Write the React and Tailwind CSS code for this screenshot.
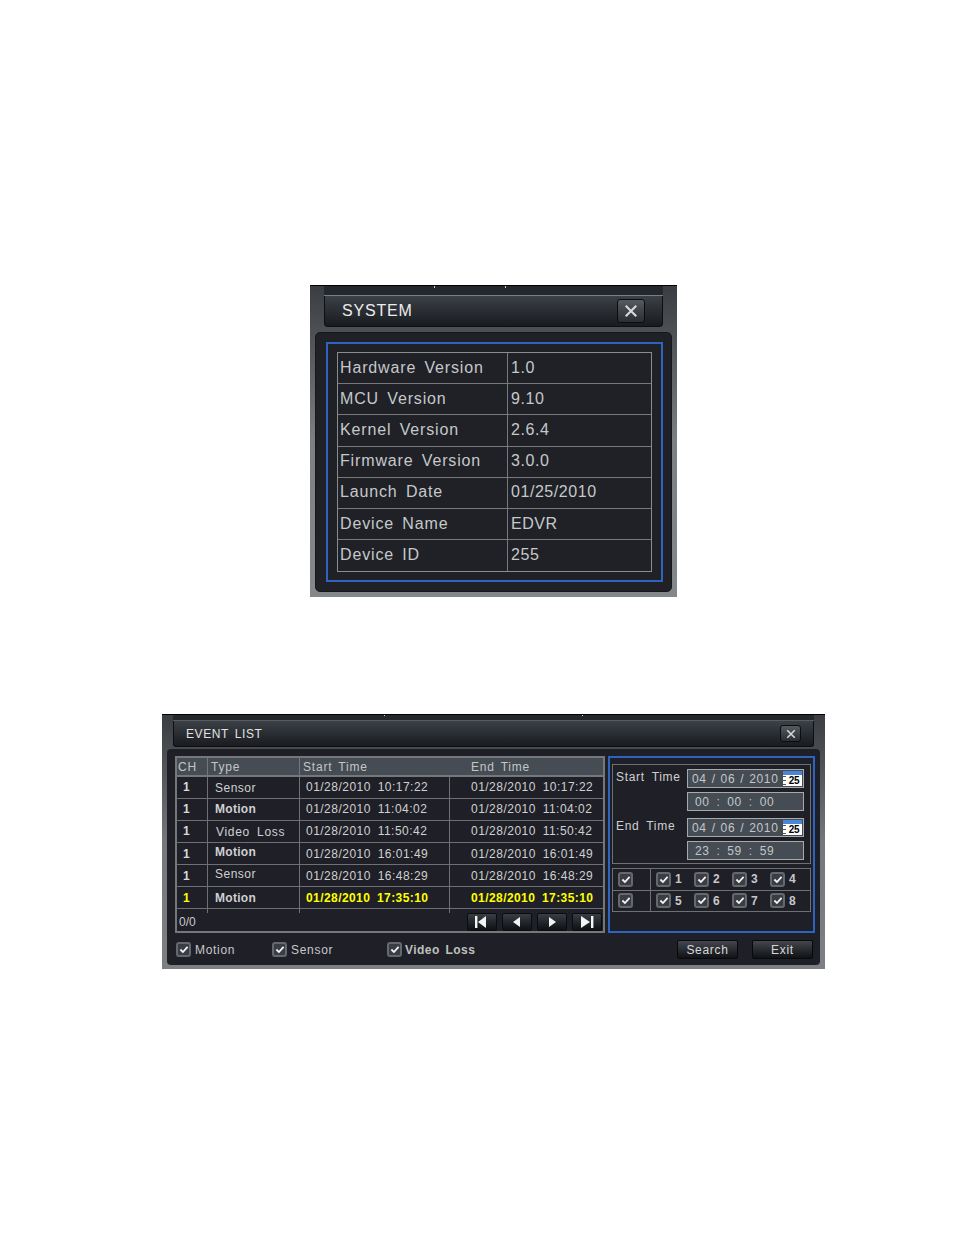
const rows = [
  { ty: "Sensor", tcls: "pl-[7px] font-normal", d: "01/28/2010 10:17:22", dc: "pb-[1px]", t: "text-[#d0d0d0]" },
  { ty: "Motion", tcls: "pl-[7px] pb-[2px] font-bold tracking-[0.3px]", d: "01/28/2010 11:04:02", dc: "pb-[1px]", t: "text-[#d0d0d0]" },
  { ty: "Video Loss", tcls: "pl-[8px] tracking-[0.7px]", d: "01/28/2010 11:50:42", dc: "pb-[1px]", t: "text-[#d0d0d0]" },
  { ty: "Motion", tcls: "pl-[7px] pb-[3px] font-bold tracking-[0.3px]", d: "01/28/2010 16:01:49", dc: "", t: "text-[#d0d0d0]" },
  { ty: "Sensor", tcls: "pl-[7px] pb-[4px]", d: "01/28/2010 16:48:29", dc: "", t: "text-[#d0d0d0]" },
  { ty: "Motion", tcls: "pl-[7px] font-bold tracking-[0.3px]", d: "01/28/2010 17:35:10", dc: "", t: "text-[#ffff00] font-bold tracking-[0.42px]" },
];

const sys = [
  ["Hardware Version", "1.0"],
  ["MCU Version", "9.10"],
  ["Kernel Version", "2.6.4"],
  ["Firmware Version", "3.0.0"],
  ["Launch Date", "01/25/2010"],
  ["Device Name", "EDVR"],
  ["Device ID", "255"],
];

function CloseBtn({ cls, size }) {
  return (
    <div className={"flex items-center justify-center rounded-[3px] border border-[#0c0d0f] bg-gradient-to-b from-[#565b60] to-[#2b2e33] " + cls}>
      <svg width={size} height={size} viewBox="0 0 12 12">
        <path d="M1.5 1.5 L10.5 10.5 M10.5 1.5 L1.5 10.5" stroke="#d8dadc" strokeWidth="1.8" />
      </svg>
    </div>
  );
}

function Check({ cls = "" }) {
  return (
    <div className={"w-[15px] h-[15px] shrink-0 rounded-[3px] border-2 border-[#66696c] bg-[#3a3e44] flex items-center justify-center " + cls}>
      <svg width="10" height="9" viewBox="0 0 11 10">
        <path d="M1.5 5 L4.3 7.8 L9.5 2" fill="none" stroke="#f4f4f4" strokeWidth="2" />
      </svg>
    </div>
  );
}

function Calendar() {
  return (
    <div className="w-[19px] h-[15px] flex flex-col bg-white shrink-0">
      <div className="h-[4px] bg-[#4a86d8]" />
      <div className="flex-1 flex">
        <div className="w-[3px] my-[1px] flex flex-col justify-between">
          <div className="h-px bg-[#555]" /><div className="h-px bg-[#555]" /><div className="h-px bg-[#555]" />
        </div>
        <div className="flex-1 text-[10px] leading-[11px] font-bold text-black text-center tracking-[-0.2px]">25</div>
      </div>
    </div>
  );
}

function Nav({ kind }) {
  const paths = {
    first: <><rect x="3" y="2" width="2.4" height="12" fill="#f4f4f4" /><path d="M14 2 V14 L6 8 Z" fill="#f4f4f4" /></>,
    prev: <path d="M13 3 V13 L6 8 Z" fill="#f4f4f4" />,
    next: <path d="M7 3 V13 L14 8 Z" fill="#f4f4f4" />,
    last: <><path d="M4 2 V14 L13 8 Z" fill="#f4f4f4" /><rect x="14" y="2" width="2.4" height="12" fill="#f4f4f4" /></>,
  };
  return (
    <div className="w-[30px] h-[18px] rounded-[2px] border border-[#0b0c0e] bg-gradient-to-b from-[#3a3e44] to-[#0f1114] flex items-center justify-center">
      <svg width="20" height="16" viewBox="0 0 20 16">{paths[kind]}</svg>
    </div>
  );
}

function Btn({ label }) {
  return (
    <div className="w-[61px] h-[19px] rounded-[2px] border border-[#08090b] bg-gradient-to-b from-[#44484e] to-[#101216] flex items-center justify-center text-[12px] tracking-[0.7px] text-[#d8d8d8]">
      {label}
    </div>
  );
}

function DateBox({ text }) {
  return (
    <div className="w-[117px] h-[19px] border border-[#a6aaac] bg-[#454c54] flex items-center justify-between pl-[4px] pr-[1px] text-[12px] tracking-[0.65px] [word-spacing:1px] text-[#c4c6c8]">
      <span>{text}</span>
      <Calendar />
    </div>
  );
}

function TimeBox({ text }) {
  return (
    <div className="w-[117px] h-[19px] border border-[#a6aaac] bg-[#454c54] flex items-center pl-[7px] text-[12px] tracking-[0.6px] [word-spacing:3px] text-[#c4c6c8]">
      {text}
    </div>
  );
}

function Cb({ n }) {
  return (
    <div className="w-[38px] flex items-center gap-[4px] text-[12px] font-bold text-[#c8c8c8]">
      <Check />
      <span>{n}</span>
    </div>
  );
}

export default function App() {
  return (
    <div className="w-[954px] h-[1235px] bg-white overflow-hidden font-['Liberation_Sans',sans-serif]">
      {/* SYSTEM */}
      <div className="ml-[310px] pt-[285px]">
        <div className="w-[367px] h-[312px] border-t border-black bg-gradient-to-b from-[#3a3d41] via-[#7d8083] to-[#85888a] flex flex-col">
          <div className="mx-[14px] h-[10px] shrink-0 bg-[#24272b] border-b border-[#7a7e82] flex gap-[70px] pl-[110px]">
            <div className="w-px h-[2px] bg-[#d0d0d0]" />
            <div className="w-px h-[2px] bg-[#d0d0d0]" />
          </div>
          <div className="mx-[14px] h-[31px] shrink-0 rounded-b-[4px] border border-t-0 border-[#0e0f11] bg-gradient-to-b from-[#3c4147] to-[#191b1f] flex items-center justify-between pl-[17px] pr-[17px]">
            <span className="text-[16px] tracking-[0.8px] text-[#ececec]">SYSTEM</span>
            <CloseBtn cls="w-[28px] h-[24px]" size={14} />
          </div>
          <div className="mx-[5px] mt-[5px] h-[260px] shrink-0 rounded-[5px] bg-[#1f2126] border border-[#17181b] pt-[9px] pl-[10px]">
            <div className="w-[337px] h-[240px] border-2 border-[#2e64bd] pt-[8px] pl-[9px]">
              <div className="w-[315px] border border-[#8a8c8e] flex flex-col">
                {sys.map(([k, v], i) => (
                  <div key={k} className={"h-[31.2px] flex items-center text-[16px] tracking-[0.85px] [word-spacing:3px] text-[#c6c8ca] " + (i < 6 ? "border-b border-[#77797b]" : "")}>
                    <div className="w-[170px] h-full flex items-center pl-[2px] pb-[1px] border-r border-[#77797b]">{k}</div>
                    <div className="flex-1 pl-[3px] pb-[1px] tracking-[0.55px]">{v}</div>
                  </div>
                ))}
              </div>
            </div>
          </div>
        </div>
      </div>

      {/* EVENT LIST */}
      <div className="ml-[162px] mt-[117px]">
        <div className="w-[663px] h-[255px] border-t border-black bg-gradient-to-b from-[#3a3d41] via-[#74787a] to-[#7d8082] flex flex-col">
          <div className="mx-[11px] h-[6px] shrink-0 bg-[#24272b] border-b border-[#585c60] flex gap-[197px] pl-[211px]">
            <div className="w-px h-[1px] bg-[#d0d0d0]" />
            <div className="w-px h-[1px] bg-[#d0d0d0]" />
          </div>
          <div className="mx-[11px] h-[26px] shrink-0 rounded-b-[3px] border border-t-0 border-[#0e0f11] bg-gradient-to-b from-[#3c4147] to-[#191b1f] flex items-center justify-between pl-[12px] pr-[12px]">
            <span className="text-[12px] tracking-[0.6px] [word-spacing:2px] text-[#e2e2e2]">EVENT LIST</span>
            <CloseBtn cls="w-[21px] h-[17px]" size={10} />
          </div>
          <div className="mx-[5px] mt-[2px] h-[216px] shrink-0 rounded-[4px] bg-[#1f2027] pt-[7px] pl-[8px] flex flex-col">
            <div className="flex h-[177px] shrink-0">
              {/* list */}
              <div className="w-[430px] h-[177px] border-2 border-[#75787a] flex flex-col text-[12px]">
                <div className="h-[17px] shrink-0 bg-[#454c54] flex items-center text-[#c4c6c8] tracking-[0.8px] [word-spacing:2px]">
                  <div className="w-[31px] h-full pl-[1px] flex items-center border-r border-[#75787a]">CH</div>
                  <div className="w-[92px] h-full pl-[3px] flex items-center border-r border-[#75787a]">Type</div>
                  <div className="w-[168px] pl-[3px]">Start Time</div>
                  <div className="flex-1 pl-[3px]">End Time</div>
                </div>
                <div className="h-[2px] shrink-0 bg-[#75787a]" />
                {rows.map((r, i) => (
                  <div key={i} className="h-[22px] shrink-0 flex items-center border-b border-[#6e7072] text-[#cfd0d2] tracking-[0.48px] [word-spacing:3px]">
                    <div className={"w-[31px] h-full pl-[6px] flex items-center font-bold border-r border-[#6e7072] " + r.dc + " " + (i === 5 ? "text-[#ffff00]" : "text-[#d8d8d8]")}>1</div>
                    <div className={"w-[92px] h-full flex items-center border-r border-[#6e7072] " + r.tcls}>{r.ty}</div>
                    <div className={"w-[150px] h-full pl-[6px] flex items-center border-r border-[#6e7072] " + r.dc + " " + r.t}>{r.d}</div>
                    <div className={"flex-1 pl-[21px] " + r.dc + " " + r.t}>{r.d}</div>
                  </div>
                ))}
                <div className="flex-1 flex">
                  <div className="w-[31px] h-[4px] border-r border-[#6e7072] shrink-0" />
                  <div className="w-[92px] h-[4px] border-r border-[#6e7072] shrink-0" />
                  <div className="w-[150px] h-[4px] border-r border-[#6e7072] shrink-0" />
                </div>
                <div className="h-[21px] shrink-0 flex items-start justify-between pl-[2px] pr-[1px] text-[#c8c8c8] -mt-[21px]">
                  <span className="mt-[3px]">0/0</span>
                  <div className="flex gap-[5px] mt-[3px]">
                    <Nav kind="first" /><Nav kind="prev" /><Nav kind="next" /><Nav kind="last" />
                  </div>
                </div>
              </div>
              {/* right panel */}
              <div className="ml-[3px] w-[207px] h-[177px] border-2 border-[#2e64bd] pt-[6px] pl-[2px] text-[12px] text-[#d0d0d0]">
                <div className="w-[199px] h-[100px] border border-[#6e7072] flex flex-col gap-[4px] pl-[3px] pt-[4px] tracking-[0.7px] [word-spacing:3px]">
                  <div className="flex items-start h-[19px] justify-between pr-[6px]"><span className="-mt-[1px]">Start Time</span><DateBox text="04 / 06 / 2010" /></div>
                  <div className="flex justify-end h-[19px] pr-[6px]"><TimeBox text="00 : 00 : 00" /></div>
                  <div className="flex items-start h-[19px] justify-between pr-[6px] mt-[3px]"><span className="-mt-[1px]">End Time</span><DateBox text="04 / 06 / 2010" /></div>
                  <div className="flex justify-end h-[19px] pr-[6px]"><TimeBox text="23 : 59 : 59" /></div>
                </div>
                <div className="w-[199px] h-[44px] mt-[4px] border border-[#6e7072] flex flex-col">
                  {[["1", "2", "3", "4"], ["5", "6", "7", "8"]].map((g, i) => (
                    <div key={i} className={"flex-1 flex items-center " + (i === 0 ? "border-b border-[#6e7072]" : "")}>
                      <div className="w-[38px] h-full pl-[5px] flex items-center border-r border-[#6e7072]"><Check /></div>
                      <div className="flex pl-[5px]">{g.map((n) => <Cb key={n} n={n} />)}</div>
                    </div>
                  ))}
                </div>
              </div>
            </div>
            {/* bottom */}
            <div className="flex items-center h-[19px] mt-[7px] text-[12px] tracking-[0.7px] [word-spacing:2px] text-[#c8c8c8]">
              <div className="flex items-center gap-[4px] w-[96px] pl-[1px]"><Check /><span>Motion</span></div>
              <div className="flex items-center gap-[4px] w-[116px] pl-[1px]"><Check /><span>Sensor</span></div>
              <div className="flex items-center gap-[3px] w-[290px]"><Check /><span className="tracking-[0.45px] font-bold text-[#c0c0c0]">Video Loss</span></div>
              <Btn label="Search" />
              <div className="w-[14px]" />
              <Btn label="Exit" />
            </div>
          </div>
        </div>
      </div>
    </div>
  );
}
